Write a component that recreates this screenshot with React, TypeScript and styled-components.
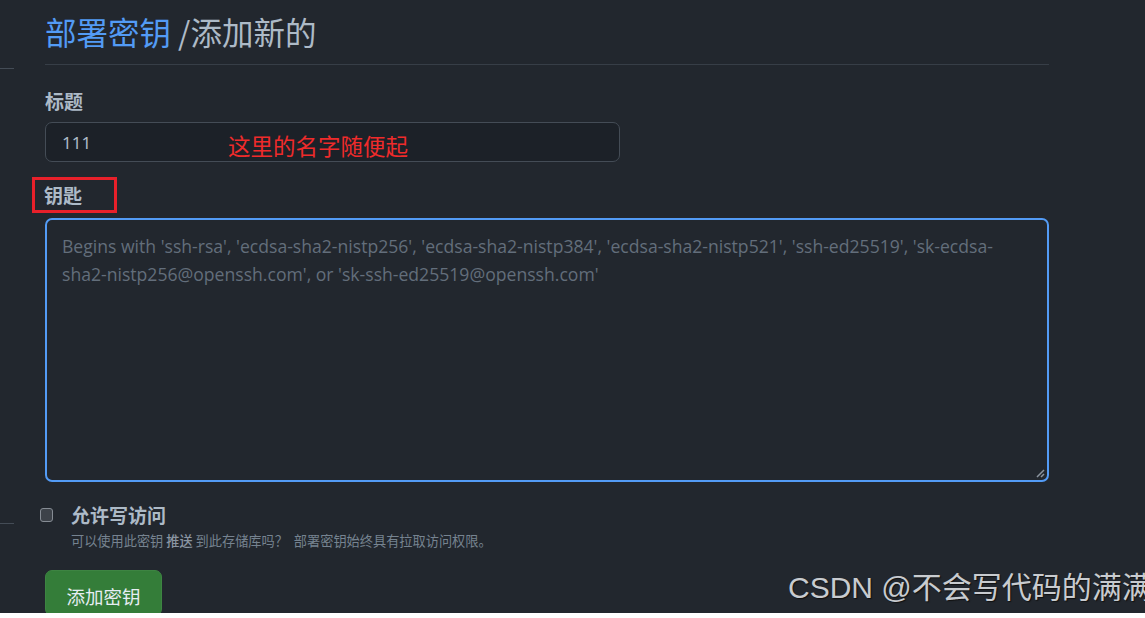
import React from "react";
import styled, { createGlobalStyle } from "styled-components";

const GlobalStyle = createGlobalStyle`
  html, body { margin: 0; padding: 0; background: #ffffff; }
  body { font-family: "Segoe UI", "Noto Sans", "Noto Sans CJK SC", sans-serif; }
  * { box-sizing: border-box; }
`;

const Page = styled.div`
  position: relative;
  height: 613px;
  width: 1145px;
  background: #22272e;
  display: flex;
  overflow: hidden;
`;

const Rail = styled.div`
  width: 14px;
  flex: none;
  display: flex;
  flex-direction: column;
`;

const RailRule = styled.div<{ $top: number }>`
  height: 1px;
  background: #444c56;
  margin-top: ${(p) => p.$top}px;
`;

const Main = styled.main`
  margin-left: 31px;
  width: 1004px;
  display: flex;
  flex-direction: column;
`;

const Header = styled.div`
  padding-top: 11px;
  padding-bottom: 13px;
  border-bottom: 1px solid #373e47;
  font-family: "Noto Sans CJK SC", sans-serif;
  font-size: 31.5px;
  line-height: 40px;
  color: #adbac7;
`;

const Crumb = styled.span`
  color: #539bf5;
`;

const Label = styled.div`
  font-family: "Noto Sans CJK SC", sans-serif;
  font-weight: 700;
  font-size: 19px;
  line-height: 24px;
  color: #adbac7;
`;

const FieldLabel = styled(Label)`
  margin-top: 24px;
`;

const Annotated = styled.div`
  align-self: flex-start;
  margin-top: 15px;
  margin-left: -13px;
  padding: 3px 32px 3px 9px;
  border: 3px solid #e8202a;
`;

const InputRow = styled.div`
  margin-top: 9px;
  display: flex;
  align-items: center;
  width: 575px;
  height: 41px;
  border: 1px solid #444c56;
  border-radius: 7px;
  background: #1c2128;
  padding-left: 16px;
`;

const InputValue = styled.span`
  font-family: "Segoe UI", "Noto Sans", sans-serif;
  font-size: 17px;
  color: #adbac7;
  width: 166px;
`;

const Note = styled.span`
  font-family: "Noto Sans CJK SC", sans-serif;
  font-size: 22.5px;
  color: #ef2b2b;
  margin-top: 6px;
`;

const TextArea = styled.div`
  position: relative;
  margin-top: 5px;
  height: 264px;
  flex: none;
  border: 2px solid #539bf5;
  border-radius: 7px;
  padding: 12px 40px 12px 15px;
`;

const Placeholder = styled.div`
  font-family: "Segoe UI", "Open Sans", "Noto Sans", sans-serif;
  font-size: 17.6px;
  line-height: 28px;
  color: #636e7b;
`;

const Grip = styled.svg`
  position: absolute;
  right: 2px;
  bottom: 2px;
`;

const CheckRow = styled.div`
  margin-top: 21px;
  margin-left: -5px;
  display: flex;
  align-items: flex-start;
  gap: 18px;
`;

const Box = styled.span`
  margin-top: 5px;
  width: 13px;
  height: 14px;
  flex: none;
  border: 1px solid #868c94;
  border-radius: 3px;
  background: #3d4249;
`;

const CheckText = styled.div`
  display: flex;
  flex-direction: column;
`;

const Hint = styled.div`
  font-family: "Noto Sans CJK SC", sans-serif;
  font-size: 13.2px;
  line-height: 20px;
  color: #768390;
  margin-top: 4px;
  white-space: pre;
`;

const Strong = styled.span`
  font-weight: 500;
  color: #8b96a3;
`;

const Button = styled.button`
  margin-top: 19px;
  align-self: flex-start;
  width: 117px;
  height: 46px;
  flex: none;
  border: 1px solid #3d8442;
  border-radius: 7px;
  background: #347d39;
  color: #e6edf3;
  font-family: "Noto Sans CJK SC", sans-serif;
  font-size: 18.5px;
  padding: 6px 0 0 0;
`;

const Watermark = styled.div`
  position: absolute;
  left: 788px;
  top: 568px;
  font-family: "Liberation Sans", "Noto Sans CJK SC", sans-serif;
  font-size: 30px;
  line-height: 40px;
  color: #c8cbcf;
  white-space: nowrap;
  text-shadow: 1px 1px 1px #111;
`;

export default function App() {
  return (
    <>
      <GlobalStyle />
      <Page>
        <Rail>
          <RailRule $top={68} />
          <RailRule $top={454} />
        </Rail>
        <Main>
          <Header>
            <Crumb>部署密钥</Crumb> /添加新的
          </Header>
          <FieldLabel>标题</FieldLabel>
          <InputRow>
            <InputValue>111</InputValue>
            <Note>这里的名字随便起</Note>
          </InputRow>
          <Annotated>
            <Label>钥匙</Label>
          </Annotated>
          <TextArea>
            <Placeholder>
              Begins with 'ssh-rsa', 'ecdsa-sha2-nistp256', 'ecdsa-sha2-nistp384', 'ecdsa-sha2-nistp521', 'ssh-ed25519', 'sk-ecdsa-sha2-nistp256@openssh.com', or 'sk-ssh-ed25519@openssh.com'
            </Placeholder>
            <Grip width="10" height="10" viewBox="0 0 10 10">
              <path d="M9 2 L2 9 M9 6 L6 9" stroke="#8b949e" strokeWidth="1.5" />
            </Grip>
          </TextArea>
          <CheckRow>
            <Box />
            <CheckText>
              <Label>允许写访问</Label>
              <Hint>
                可以使用此密钥 <Strong>推送</Strong> 到此存储库吗？  部署密钥始终具有拉取访问权限。
              </Hint>
            </CheckText>
          </CheckRow>
          <Button>添加密钥</Button>
        </Main>
        <Watermark>CSDN @不会写代码的满满</Watermark>
      </Page>
    </>
  );
}
